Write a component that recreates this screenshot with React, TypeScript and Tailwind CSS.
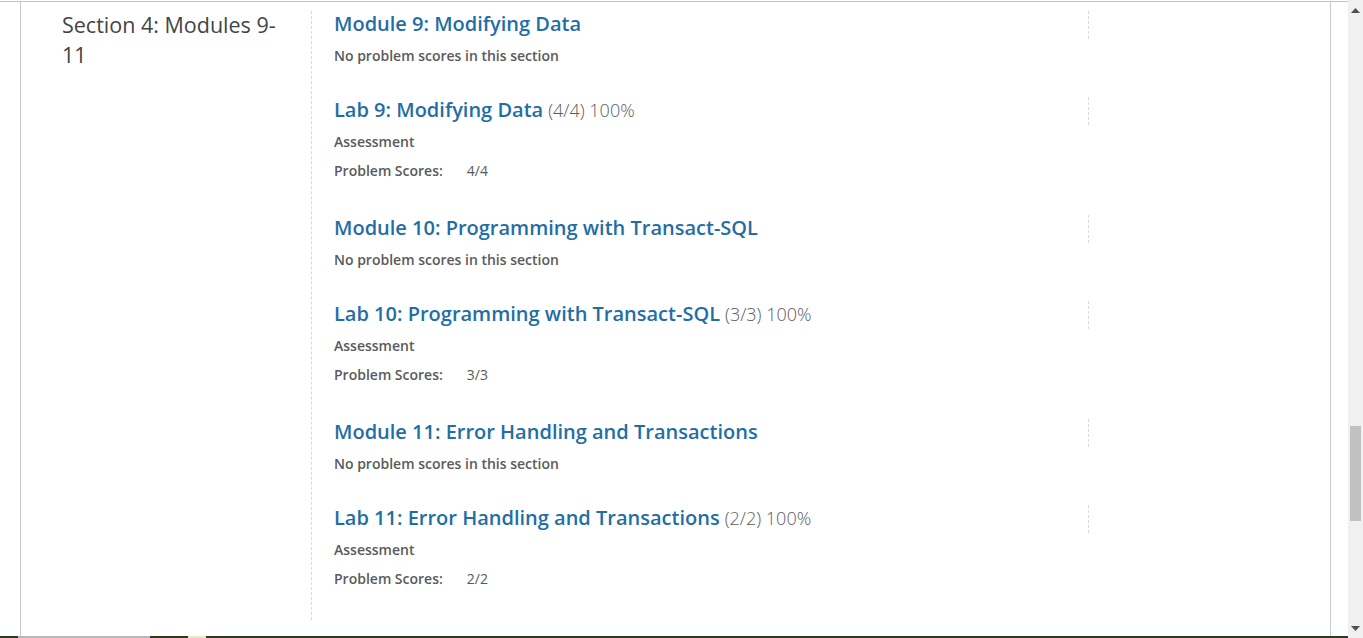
import React from "react";

type Item =
  | { kind: "module"; title: string }
  | { kind: "lab"; title: string; score: string; percent: string };

const items: Item[] = [
  { kind: "module", title: "Module 9: Modifying Data" },
  { kind: "lab", title: "Lab 9: Modifying Data", score: "4/4", percent: "100%" },
  { kind: "module", title: "Module 10: Programming with Transact-SQL" },
  { kind: "lab", title: "Lab 10: Programming with Transact-SQL", score: "3/3", percent: "100%" },
  { kind: "module", title: "Module 11: Error Handling and Transactions" },
  { kind: "lab", title: "Lab 11: Error Handling and Transactions", score: "2/2", percent: "100%" },
];

function Heading({ children }: { children: React.ReactNode }) {
  return (
    <div className="h-[28px] w-[755px] border-r border-dashed border-[#d9d9d9] text-[20px] leading-[26px]">
      {children}
    </div>
  );
}

function ModuleRow({ title }: { title: string }) {
  return (
    <div className="mb-[31px]">
      <Heading>
        <a href="#" className="font-semibold text-[#1f6ea6]">
          {title}
        </a>
      </Heading>
      <p className="mt-[7px] text-[14px] leading-5 font-semibold text-[#5a5a5a]">
        No problem scores in this section
      </p>
    </div>
  );
}

function LabRow({ title, score, percent }: { title: string; score: string; percent: string }) {
  return (
    <div className="mb-[34px] last:mb-[31px]">
      <Heading>
        <a href="#" className="font-semibold text-[#1f6ea6]">
          {title}
        </a>
        <span className="ml-[5px] text-[18px] font-light text-[#5c5c5c]">
          ({score}) {percent}
        </span>
      </Heading>
      <p className="mt-[7px] text-[14px] leading-5 font-semibold text-[#5a5a5a]">Assessment</p>
      <div className="mt-[9px] flex text-[14px] leading-5 text-[#5a5a5a]">
        <span className="font-semibold">Problem Scores:</span>
        <span className="ml-[24px]">{score}</span>
      </div>
    </div>
  );
}

function Scrollbar() {
  return (
    <div className="relative h-[638px] w-[15px] shrink-0 bg-[#f0f0f0]">
      <svg className="absolute left-[3px] top-[8px]" width="9" height="6" viewBox="0 0 9 6">
        <path d="M0 5 L4.5 0 L9 5 Z" fill="#505050" />
      </svg>
      <div className="absolute left-[2px] top-[426px] h-[95px] w-[11px] bg-[#c1c1c1]" />
      <svg className="absolute left-[3px] top-[626px]" width="9" height="6" viewBox="0 0 9 6">
        <path d="M0 0 L9 0 L4.5 5 Z" fill="#505050" />
      </svg>
    </div>
  );
}

export default function App() {
  return (
    <div className="flex h-[638px] w-[1363px] overflow-hidden bg-white" style={{ fontFamily: '"Open Sans", sans-serif' }}>
      <div className="flex w-[1348px] flex-col">
        <div className="h-px" />
        <div className="flex-1 border-t border-[#c4c4c4]">
          <div className="mx-[20px] flex h-full w-[1311px] border-x border-[#c8c8c8] pt-[9px]">
            {/* section title */}
            <div className="w-[290px] shrink-0 pl-[41px]">
              <h3 className="-mt-[1px] w-[222px] text-[21.5px] leading-[30px] font-normal text-[#444]">
                Section 4: Modules 9-11
              </h3>
            </div>
            {/* graded items */}
            <div className="self-start border-l border-dashed border-[#d9d9d9] pl-[22px]">
              {items.map((item) =>
                item.kind === "module" ? (
                  <ModuleRow key={item.title} title={item.title} />
                ) : (
                  <LabRow key={item.title} title={item.title} score={item.score} percent={item.percent} />
                )
              )}
            </div>
          </div>
        </div>
        {/* bottom edge of next frame */}
        <div className="flex h-[2px] bg-[#2f3a25]">
          <div className="ml-[18px] w-[132px] bg-[#b8b8b8]" />
          <div className="ml-[38px] w-[18px] bg-[#e8e6c8]" />
        </div>
      </div>
      <Scrollbar />
    </div>
  );
}
